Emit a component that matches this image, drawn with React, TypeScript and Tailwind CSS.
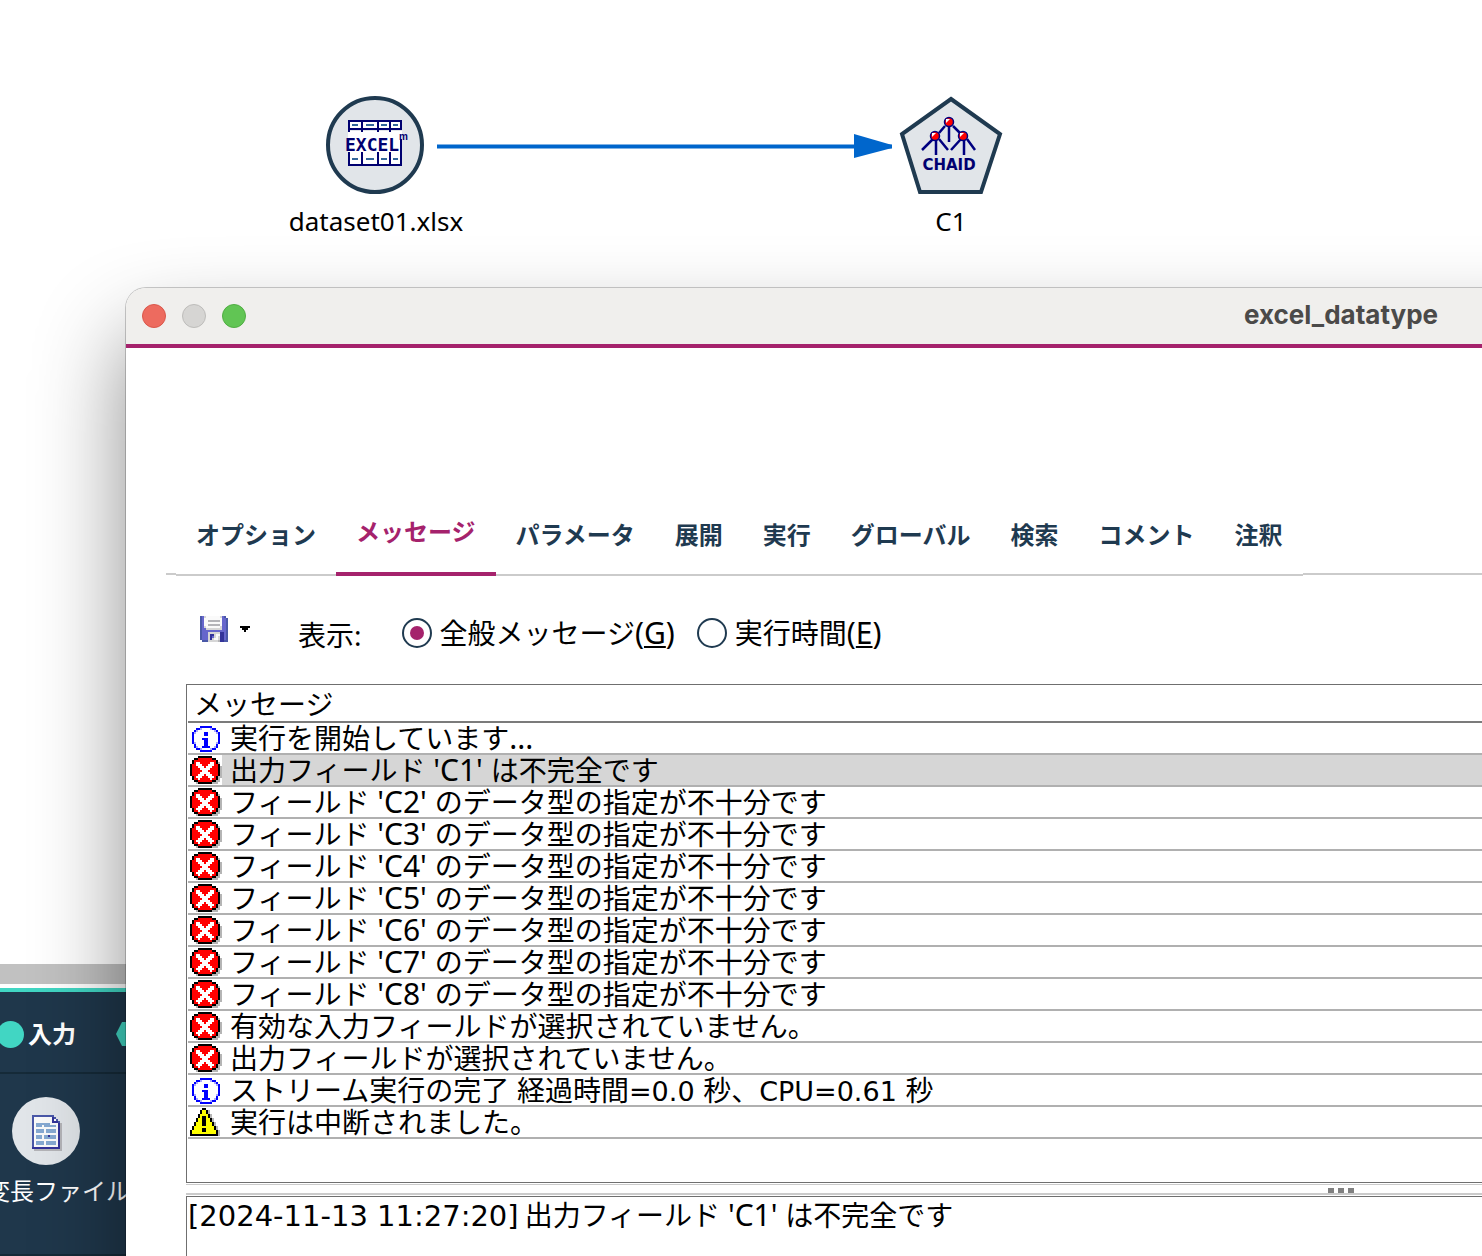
import { useState } from "react";

type MessageKind = "info" | "error" | "warning";

interface Message {
  kind: MessageKind;
  text: string;
}

const INFO_ICON = [
  "................",
  ".....bbbbbb.....",
  "...bbl....lbb...",
  "..bl........lb..",
  ".bl....bb....lb.",
  ".b.....bb.....b.",
  ".b............b.",
  ".b....bbb.....b.",
  ".b.....bb.....b.",
  ".bl....bb....lb.",
  "..b....bb....b..",
  "..bl..bbbb..lb..",
  "...bbl....lbb...",
  ".....bbbbbb.....",
];

const ERROR_ICON = [
  "....kkkkkkk.....",
  "..kkrrrrrrrkk...",
  ".krrrrrrrrrrrk..",
  ".krwwrrrrrwwrks.",
  "krrwwwrrrwwwrrk.",
  "krrrwwwrwwwrrrks",
  "krrrrwwwwwrrrrks",
  "krrrrrwwwrrrrrks",
  "krrrrwwwwwrrrrks",
  "krrrwwwrwwwrrrks",
  ".krwwwrrrwwwrkss",
  ".krrwrrrrrwrrks.",
  "..kkrrrrrrrkkss.",
  "...skkkkkkksss..",
];

const WARNING_ICON = [
  "......kk........",
  ".....kyyks......",
  ".....kyyks......",
  "....kyyyyks.....",
  "....kykkyks.....",
  "...kyykkyyks....",
  "...kyykkyyks....",
  "..kyyykkyyyks...",
  "..kyyykkyyyks...",
  ".kyyyyyyyyyyks..",
  ".kyyyykkyyyyks..",
  "kyyyyykkyyyyyks.",
  "kyyyyyyyyyyyyks.",
  "kkkkkkkkkkkkkks.",
];

const SAVE_ICON = [
  "dpgwwwwwwwgpd.",
  "dpwwwwwwwwwppd",
  "dpwwsssssswppd",
  "dpwwwwwwwwwppd",
  "dpwwsssssswppd",
  "dpgwwwwwwwgppd",
  "dppggggggggppd",
  "dppppppppppppd",
  "dpppggggggnnpd",
  "dpppgnngwwnnpd",
  "dpppgnpgwgnnpd",
  "dpppgngwwgnnpd",
  ".dddgggggsnndd",
];

const DOCUMENT_ICON = [
  "ddddddddddd.....",
  "dwwwwwwwwwnd....",
  "dwwwwwwwwwnwd...",
  "dwwwwwwwwwnnnd..",
  "dwfffffffwwwwns.",
  "dwfffwffffffwns.",
  "dwwwwwwwwwwwwns.",
  "dwffffwfffffwns.",
  "dwffffwfffffwns.",
  "dwwwwwwwwwwwwns.",
  "dwfffwffnfffwns.",
  "dwfffwffffffwns.",
  "dwwwwwwwwwwwwns.",
  "dwffffwfffffwns.",
  "dwffffwfffffwns.",
  "dwwwwwwwwwwwwns.",
  "nnnnnnnnnnnnnns.",
  ".ssssssssssssss.",
];

const ALERT_COLORS: Record<string, string> = {
  b: "#0000ff",
  l: "#a9a9ff",
  k: "#000000",
  r: "#ff0000",
  w: "#ffffff",
  s: "#b5b5b5",
  y: "#ffff00",
};

const FILE_COLORS: Record<string, string> = {
  d: "#4a58a8",
  p: "#6666cc",
  g: "#d6d6d6",
  w: "#fafafa",
  s: "#b4b4b8",
  n: "#333399",
  f: "#86a9d2",
};

const ICONS: Record<MessageKind, { rows: string[]; label: string }> = {
  info: { rows: INFO_ICON, label: "情報" },
  error: { rows: ERROR_ICON, label: "エラー" },
  warning: { rows: WARNING_ICON, label: "警告" },
};

const TABS = [
  "オプション",
  "メッセージ",
  "パラメータ",
  "展開",
  "実行",
  "グローバル",
  "検索",
  "コメント",
  "注釈",
];

const MESSAGES: Message[] = [
  { kind: "info", text: "実行を開始しています..." },
  { kind: "error", text: "出力フィールド 'C1' は不完全です" },
  { kind: "error", text: "フィールド 'C2' のデータ型の指定が不十分です" },
  { kind: "error", text: "フィールド 'C3' のデータ型の指定が不十分です" },
  { kind: "error", text: "フィールド 'C4' のデータ型の指定が不十分です" },
  { kind: "error", text: "フィールド 'C5' のデータ型の指定が不十分です" },
  { kind: "error", text: "フィールド 'C6' のデータ型の指定が不十分です" },
  { kind: "error", text: "フィールド 'C7' のデータ型の指定が不十分です" },
  { kind: "error", text: "フィールド 'C8' のデータ型の指定が不十分です" },
  { kind: "error", text: "有効な入力フィールドが選択されていません。" },
  { kind: "error", text: "出力フィールドが選択されていません。" },
  { kind: "info", text: "ストリーム実行の完了 経過時間=0.0 秒、CPU=0.61 秒" },
  { kind: "warning", text: "実行は中断されました。" },
];

interface PixelIconProps {
  rows: string[];
  colors: Record<string, string>;
  className: string;
  label?: string;
}

const PixelIcon = ({ rows, colors, className, label }: PixelIconProps) => (
  <svg
    viewBox={`0 0 ${rows[0].length} ${rows.length}`}
    shapeRendering="crispEdges"
    className={className}
    role={label ? "img" : undefined}
    aria-label={label}
    aria-hidden={label ? undefined : true}
  >
    {rows.flatMap((row, y) =>
      [...row].map((cell, x) =>
        colors[cell] ? (
          <rect
            key={`${x}-${y}`}
            x={x}
            y={y}
            width="1"
            height="1"
            fill={colors[cell]}
          />
        ) : null
      )
    )}
  </svg>
);

const MixedText = ({ text }: { text: string }) => (
  <>
    {text.split(/([ -~]+)/).map((part, i) =>
      i % 2 ? (
        <span
          key={i}
          className={
            part.includes("=")
              ? "font-['DejaVu_Sans',sans-serif] text-[27px] leading-[0]"
              : "text-[30px] leading-[0]"
          }
        >
          {part}
        </span>
      ) : (
        part
      )
    )}
  </>
);

const ExcelIcon = () => (
  <svg viewBox="0 0 100 100" className="size-[100px]" aria-hidden="true">
    <circle cx="49" cy="50" r="47" fill="#e1e5e9" stroke="#1f3a50" strokeWidth="4" />
    <g shapeRendering="crispEdges" fill="none" stroke="#000070" strokeWidth="2">
      <path fill="#fff" stroke="none" d="M22 36h54v34H22z" />
      <path fill="#fff" d="M23 26h52v8H23z" />
      <path d="M36 26v11M52 26v11M64 26v11M23 26v11M75 44v26M23 57v13M36 57v13M52 57v13M64 57v13M22 70h54" />
      <path
        stroke="#33669a"
        d="M26 30h6M40 30h8M55 30h6M67 30h5M26 64h6M40 64h8M55 64h6M67 64h5"
      />
    </g>
    <text
      x="19"
      y="56"
      fill="#000070"
      className="font-['DejaVu_Sans_Mono',monospace] text-[18px] font-bold"
    >
      EXCEL
    </text>
    <text
      x="73"
      y="45"
      fill="#000070"
      className="font-['Liberation_Sans',sans-serif] text-[10px] font-bold"
    >
      m
    </text>
  </svg>
);

const ChaidIcon = () => (
  <svg viewBox="0 0 104 100" className="h-[100px] w-[104px]" aria-hidden="true">
    <path
      d="M52 4 101 39 82 97H21L3 39z"
      fill="#e1e5e9"
      stroke="#1f3a50"
      strokeWidth="4"
    />
    <g stroke="#000080" strokeWidth="2.5" fill="none">
      <path d="M50 29v18M46 31 40 38M54 31l7 7M37 42v18M65 42v18M34 44 23 55M40 44l9 11M62 44 52 55M68 44l8 11" />
    </g>
    {[
      [50, 27],
      [36, 41],
      [64, 41],
    ].map(([x, y]) => (
      <g key={x}>
        <circle cx={x} cy={y} r="4.5" fill="#ff0000" stroke="#000080" strokeWidth="1.5" />
        <path d={`M${x - 3} ${y - 3}h4l-4 4z`} fill="#fff" />
      </g>
    ))}
    <text
      x="50"
      y="75"
      textAnchor="middle"
      fill="#000070"
      className="font-['DejaVu_Sans',sans-serif] text-[15px] font-bold"
    >
      CHAID
    </text>
  </svg>
);

const StreamCanvas = () => (
  <div className="relative grow bg-white font-['Noto_Sans',sans-serif] text-[26px] leading-8">
    <div className="absolute top-[95px] left-[276px] flex w-[200px] flex-col items-center gap-[10px]">
      <ExcelIcon />
      <span>dataset01.xlsx</span>
    </div>
    <svg
      viewBox="0 0 456 24"
      className="absolute top-[134px] left-[437px] h-6 w-[456px]"
      aria-hidden="true"
    >
      <path d="M0 12.5h455" stroke="#0066cc" strokeWidth="4" />
      <path d="M417 0 455 11v3L417 24z" fill="#0066cc" />
    </svg>
    <div className="absolute top-[95px] left-[851px] flex w-[200px] flex-col items-center gap-[10px]">
      <ChaidIcon />
      <span>C1</span>
    </div>
  </div>
);

const NodePalette = () => (
  <div className="border-t-4 border-[#41d6c3] bg-[#1f374b] text-2xl text-white">
    <div className="flex h-[82px] items-center gap-10 border-b-2 border-[#152a38] pt-1 font-bold">
      <button type="button" className="-ml-[3px] flex items-center gap-1">
        <span className="size-[27px] rounded-full bg-[#41d6c3]" />
        入力
      </button>
      <svg viewBox="0 0 28 24" className="h-6 w-7" aria-hidden="true">
        <path d="M0 12 6 0h16l6 12-6 12H6z" fill="#41d6c3" />
      </svg>
    </div>
    <div className="flex h-[182px] border-b-2 border-[#152a38] pt-[23px]">
      <button type="button" className="flex w-[92px] flex-col items-center gap-2">
        <span className="flex size-[68px] shrink-0 items-center justify-center rounded-full bg-[#e1e5e9]">
          <PixelIcon rows={DOCUMENT_ICON} colors={FILE_COLORS} className="mt-1 ml-1 h-9 w-8" />
        </span>
        <span className="leading-9 whitespace-nowrap">可変長ファイル</span>
      </button>
    </div>
  </div>
);

const TitleBar = () => (
  <header className="relative flex h-[60px] items-center justify-center border-b-4 border-[#a5226c] bg-[#f0efed]">
    <div className="absolute left-4 flex gap-4">
      <button
        type="button"
        aria-label="閉じる"
        className="size-6 rounded-full border border-[#d9574b] bg-[#ed6b5f]"
      />
      <button
        type="button"
        aria-label="しまう"
        className="size-6 rounded-full border border-[#bdbcba] bg-[#d6d5d3]"
      />
      <button
        type="button"
        aria-label="拡大"
        className="size-6 rounded-full border border-[#50ad43] bg-[#61c554]"
      />
    </div>
    <h1 className="pb-1 font-['Inter',sans-serif] text-[26px] font-bold text-[#4b4a49]">
      excel_datatype
    </h1>
  </header>
);

interface TabBarProps {
  active: string;
  onChange: (tab: string) => void;
}

const TabBar = ({ active, onChange }: TabBarProps) => (
  <div role="tablist" className="flex items-end text-2xl font-bold">
    <span className="mb-px w-[10px] border-b-2 border-[#cbcbcb]" />
    {TABS.map((tab) => (
      <button
        key={tab}
        type="button"
        role="tab"
        aria-selected={tab === active}
        onClick={() => onChange(tab)}
        className={
          tab === active
            ? "h-16 border-b-4 border-[#a5226c] px-5 pb-5 leading-9 text-[#a5226c]"
            : "h-16 border-b-2 border-[#cbcbcb] px-5 pb-4 leading-9 text-[#1f3a50]"
        }
      >
        {tab}
      </button>
    ))}
    <span className="mb-px grow border-b-2 border-[#cbcbcb]" />
  </div>
);

interface RadioProps {
  label: string;
  accessKey: string;
  checked: boolean;
  onChange: () => void;
}

const Radio = ({ label, accessKey, checked, onChange }: RadioProps) => (
  <label className="flex items-center gap-2">
    <input
      type="radio"
      name="view"
      checked={checked}
      onChange={onChange}
      className="grid size-[30px] appearance-none place-content-center rounded-full border-2 border-[#1f3a50] before:size-[14px] before:rounded-full checked:before:bg-[#a5226c]"
    />
    <span>
      {label}
      <span className="text-[30px] leading-[0]">
        (<span className="underline decoration-2 underline-offset-2">{accessKey}</span>)
      </span>
    </span>
  </label>
);

const Toolbar = () => {
  const [view, setView] = useState("general");

  return (
    <div className="flex items-center pt-[35px] pl-[34px] leading-10">
      <button type="button" aria-label="保存" className="flex items-center gap-3">
        <PixelIcon rows={SAVE_ICON} colors={FILE_COLORS} className="mb-2 h-[26px] w-7" />
        <svg viewBox="0 0 10 6" className="mb-2 h-[6px] w-[10px]" aria-hidden="true">
          <path d="M0 0h10v2H8v2H6v2H4V4H2V2H0z" shapeRendering="crispEdges" />
        </svg>
      </button>
      <span id="view-label" className="mt-1 ml-12">
        表示:
      </span>
      <div role="radiogroup" aria-labelledby="view-label" className="ml-10 flex gap-[22px]">
        <Radio
          label="全般メッセージ"
          accessKey="G"
          checked={view === "general"}
          onChange={() => setView("general")}
        />
        <Radio
          label="実行時間"
          accessKey="E"
          checked={view === "time"}
          onChange={() => setView("time")}
        />
      </div>
    </div>
  );
};

const MessageTable = () => {
  const [selected, setSelected] = useState(1);

  return (
    <div className="min-h-[499px] border border-[#6f6f6f] pl-px">
      <table className="w-full border-separate border-spacing-0 text-left leading-[30px]">
        <thead>
          <tr>
            <th
              colSpan={2}
              className="h-[38px] border-b-2 border-[#7b7b7b] p-0 pt-0.5 pl-[6px] font-normal"
            >
              メッセージ
            </th>
          </tr>
        </thead>
        <tbody>
          {MESSAGES.map(({ kind, text }, i) => (
            <tr key={i} onClick={() => setSelected(i)}>
              <td className="h-8 w-[34px] border-b-2 border-[#b0b0b0] p-0 pl-0.5">
                <PixelIcon
                  rows={ICONS[kind].rows}
                  colors={ALERT_COLORS}
                  label={ICONS[kind].label}
                  className="block h-7 w-8"
                />
              </td>
              <td
                className={
                  i === selected
                    ? "h-8 border-b-2 border-[#b0b0b0] bg-[#d6d6d6] p-0 pl-2 whitespace-nowrap"
                    : "h-8 border-b-2 border-[#b0b0b0] p-0 pl-2 whitespace-nowrap"
                }
              >
                <MixedText text={text} />
              </td>
            </tr>
          ))}
        </tbody>
      </table>
    </div>
  );
};

const MessageWindow = () => {
  const [tab, setTab] = useState("メッセージ");

  return (
    <main className="absolute top-[288px] -right-[1074px] -bottom-[200px] left-[126px] flex flex-col overflow-hidden rounded-tl-[20px] bg-white text-[28px] shadow-[0_0_0_1px_rgba(0,0,0,0.2),0_48px_90px_rgba(0,0,0,0.45)]">
      <TitleBar />
      <div className="flex grow flex-col px-10 pt-[164px]">
        <TabBar active={tab} onChange={setTab} />
        <Toolbar />
        <div className="flex grow flex-col px-5 pt-[29px]">
          <MessageTable />
          <div className="mt-px mb-px flex h-[11px] items-end justify-center gap-1 border-t border-b-2 border-[#cbcbcb]">
            <span className="h-[5px] w-[6px] bg-[#808080]" />
            <span className="h-[5px] w-[6px] bg-[#808080]" />
            <span className="h-[5px] w-[6px] bg-[#808080]" />
          </div>
          <p className="grow border border-[#6f6f6f] pl-px leading-9">
            <span className="mr-1.5 font-['DejaVu_Sans',sans-serif] text-[29px] leading-[0]">
              [2024-11-13 11:27:20]
            </span>
            <MixedText text="出力フィールド 'C1' は不完全です" />
          </p>
        </div>
      </div>
    </main>
  );
};

const App = () => (
  <div
    lang="ja"
    className="relative flex min-h-screen flex-col overflow-hidden bg-white font-['Noto_Sans','Noto_Sans_CJK_JP',sans-serif] text-black"
  >
    <StreamCanvas />
    <div className="mb-1 h-5 bg-[#c1c1c1]" />
    <NodePalette />
    <MessageWindow />
  </div>
);

export default App;
